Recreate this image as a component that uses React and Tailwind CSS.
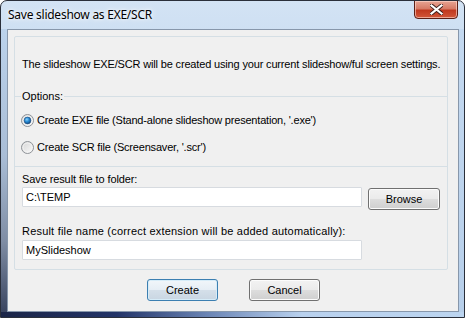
import React from "react";

function Radio({ checked }) {
  return (
    <svg width="13" height="13" viewBox="0 0 13 13" className="shrink-0">
      <defs>
        <linearGradient id={checked ? "rg1" : "rg0"} x1="0" y1="0" x2="1" y2="1">
          <stop offset="0" stopColor="#d4d4d4" />
          <stop offset="1" stopColor="#fbfbfb" />
        </linearGradient>
        <radialGradient id="dot" cx="0.4" cy="0.35" r="0.7">
          <stop offset="0" stopColor="#8cd1fb" />
          <stop offset="0.45" stopColor="#2a8ed6" />
          <stop offset="1" stopColor="#11427a" />
        </radialGradient>
      </defs>
      <circle cx="6.5" cy="6.5" r="6" fill={`url(#${checked ? "rg1" : "rg0"})`} stroke="#8e9297" strokeWidth="1" />
      <circle cx="6.5" cy="6.5" r="4.5" fill="none" stroke="#f4f4f4" strokeWidth="0.8" />
      {checked && <circle cx="6.5" cy="6.5" r="3.4" fill="url(#dot)" stroke="#1c4c7e" strokeWidth="0.6" />}
    </svg>
  );
}

function Button({ children, def, className = "" }) {
  return (
    <div
      className={`h-[22px] rounded-[3px] border flex items-center justify-center text-black ${
        def
          ? "border-[#3c7fb1] bg-[linear-gradient(#f1f6fa_0%,#e6eef5_48%,#d4dfe9_52%,#c9d6e2_100%)] shadow-[inset_0_0_0_1px_#d6ecf8]"
          : "border-[#707070] bg-[linear-gradient(#f2f2f2_0%,#ebebeb_48%,#dddddd_52%,#cfcfcf_100%)] shadow-[inset_0_0_0_1px_#fcfcfc]"
      } ${className}`}
    >
      {children}
    </div>
  );
}

export default function App() {
  const line = "bg-[#d5dfe5]";
  return (
    <div
      className="w-[465px] h-[318px] flex flex-col overflow-hidden rounded-t-[7px] border border-[#2a2f3a] bg-[linear-gradient(180deg,#d3e3f4_0%,#bed5ee_40%,#b8d0ea_100%)]"
      style={{ fontFamily: '"Liberation Sans", Arial, sans-serif' }}
    >
      {/* title bar */}
      <div className="h-[28px] flex justify-between items-start shrink-0">
        <div
          className="h-[28px] flex items-center pl-[7px] text-[12px] tracking-[-0.25px] text-black [text-shadow:0_0_6px_#ffffff,0_0_3px_#ffffff]"
          style={{ fontFamily: '"Noto Sans", "Open Sans", sans-serif' }}
        >
          Save slideshow as EXE/SCR
        </div>
        <div className="mr-[6px] w-[44px] h-[19px] -mt-px rounded-b-[4px] border border-[#5b1f16] bg-[linear-gradient(180deg,#e8a493_0%,#d77b66_45%,#c0391f_55%,#d2573a_100%)] shadow-[inset_0_0_0_1px_rgba(255,220,210,0.6)] flex items-center justify-center">
          <svg width="13" height="11" viewBox="0 0 13 11">
            <path d="M1.5 1.5 L11.5 9.5 M11.5 1.5 L1.5 9.5" stroke="#3a1d1a" strokeWidth="4" strokeLinecap="square" />
            <path d="M1.5 1.5 L11.5 9.5 M11.5 1.5 L1.5 9.5" stroke="#ffffff" strokeWidth="2.2" strokeLinecap="square" />
          </svg>
        </div>
      </div>

      {/* middle */}
      <div className="flex flex-1 min-h-0">
        <div className="w-[6px] bg-[linear-gradient(180deg,#bcd3ec_0%,#a9bdd6_45%,#7f8da4_75%,#3a4560_100%)]" />
        <div className="w-[452px] h-[283px] border border-[#8797ab] bg-[#f0f0f0] text-[11px] text-black leading-[13px] pt-[6px]">
          <div className="ml-[6px] w-[434px] border border-[#d5dfe5] rounded-[2px]">
            <div className="h-[53px] pt-[21px] pl-[7px] whitespace-nowrap tracking-[-0.16px]">
              The slideshow EXE/SCR will be created using your current slideshow/ful screen settings.
            </div>
            <div className="flex items-center h-[13px]">
              <div className={`w-[6px] h-px ${line}`} />
              <span className="px-[1px]">Options:</span>
              <div className={`flex-1 h-px ${line}`} />
            </div>
            <div className="mt-[11px] pl-[6px] flex items-center gap-[3px] h-[13px]">
              <Radio checked />
              <span className="whitespace-nowrap tracking-[-0.2px]">Create EXE file (Stand-alone slideshow presentation, '.exe')</span>
            </div>
            <div className="mt-[14px] pl-[6px] flex items-center gap-[3px] h-[13px]">
              <Radio />
              <span className="whitespace-nowrap tracking-[-0.19px]">Create SCR file (Screensaver, '.scr')</span>
            </div>
            <div className={`mt-[12px] h-px ${line}`} />
            <div className="pl-[7px] pt-[6px] pb-[9px]">
              <div className="h-[13px] tracking-[-0.1px]">Save result file to folder:</div>
              <div className="mt-px flex items-start">
                <div className="w-[340px] h-[20px] bg-white border border-[#d7dbe0] rounded-[1px] flex items-center pl-[3px]">
                  C:\TEMP
                </div>
                <Button className="ml-[6px] w-[72px] mt-px h-[21px]">Browse</Button>
              </div>
              <div className="mt-[15px] h-[13px] whitespace-nowrap tracking-[0.2px]">
                Result file name (correct extension will be added automatically):
              </div>
              <div className="mt-[2px] w-[340px] h-[20px] bg-white border border-[#d7dbe0] rounded-[1px] flex items-center pl-[3px]">
                MySlideshow
              </div>
            </div>
          </div>
          <div className="mt-[9px] flex justify-center gap-[31px] pl-[1px]">
            <Button def className="w-[71px]">Create</Button>
            <Button className="w-[71px]">Cancel</Button>
          </div>
        </div>
        <div className="flex-1 bg-[linear-gradient(180deg,#c4d9f0_0%,#b7cfea_100%)]" />
      </div>

      {/* bottom strip */}
      <div className="h-[5px] shrink-0 bg-[linear-gradient(90deg,#1b2547_0%,#233468_25%,#6c86b6_45%,#b9d1ee_65%,#bcd5f0_100%)]" />
    </div>
  );
}
